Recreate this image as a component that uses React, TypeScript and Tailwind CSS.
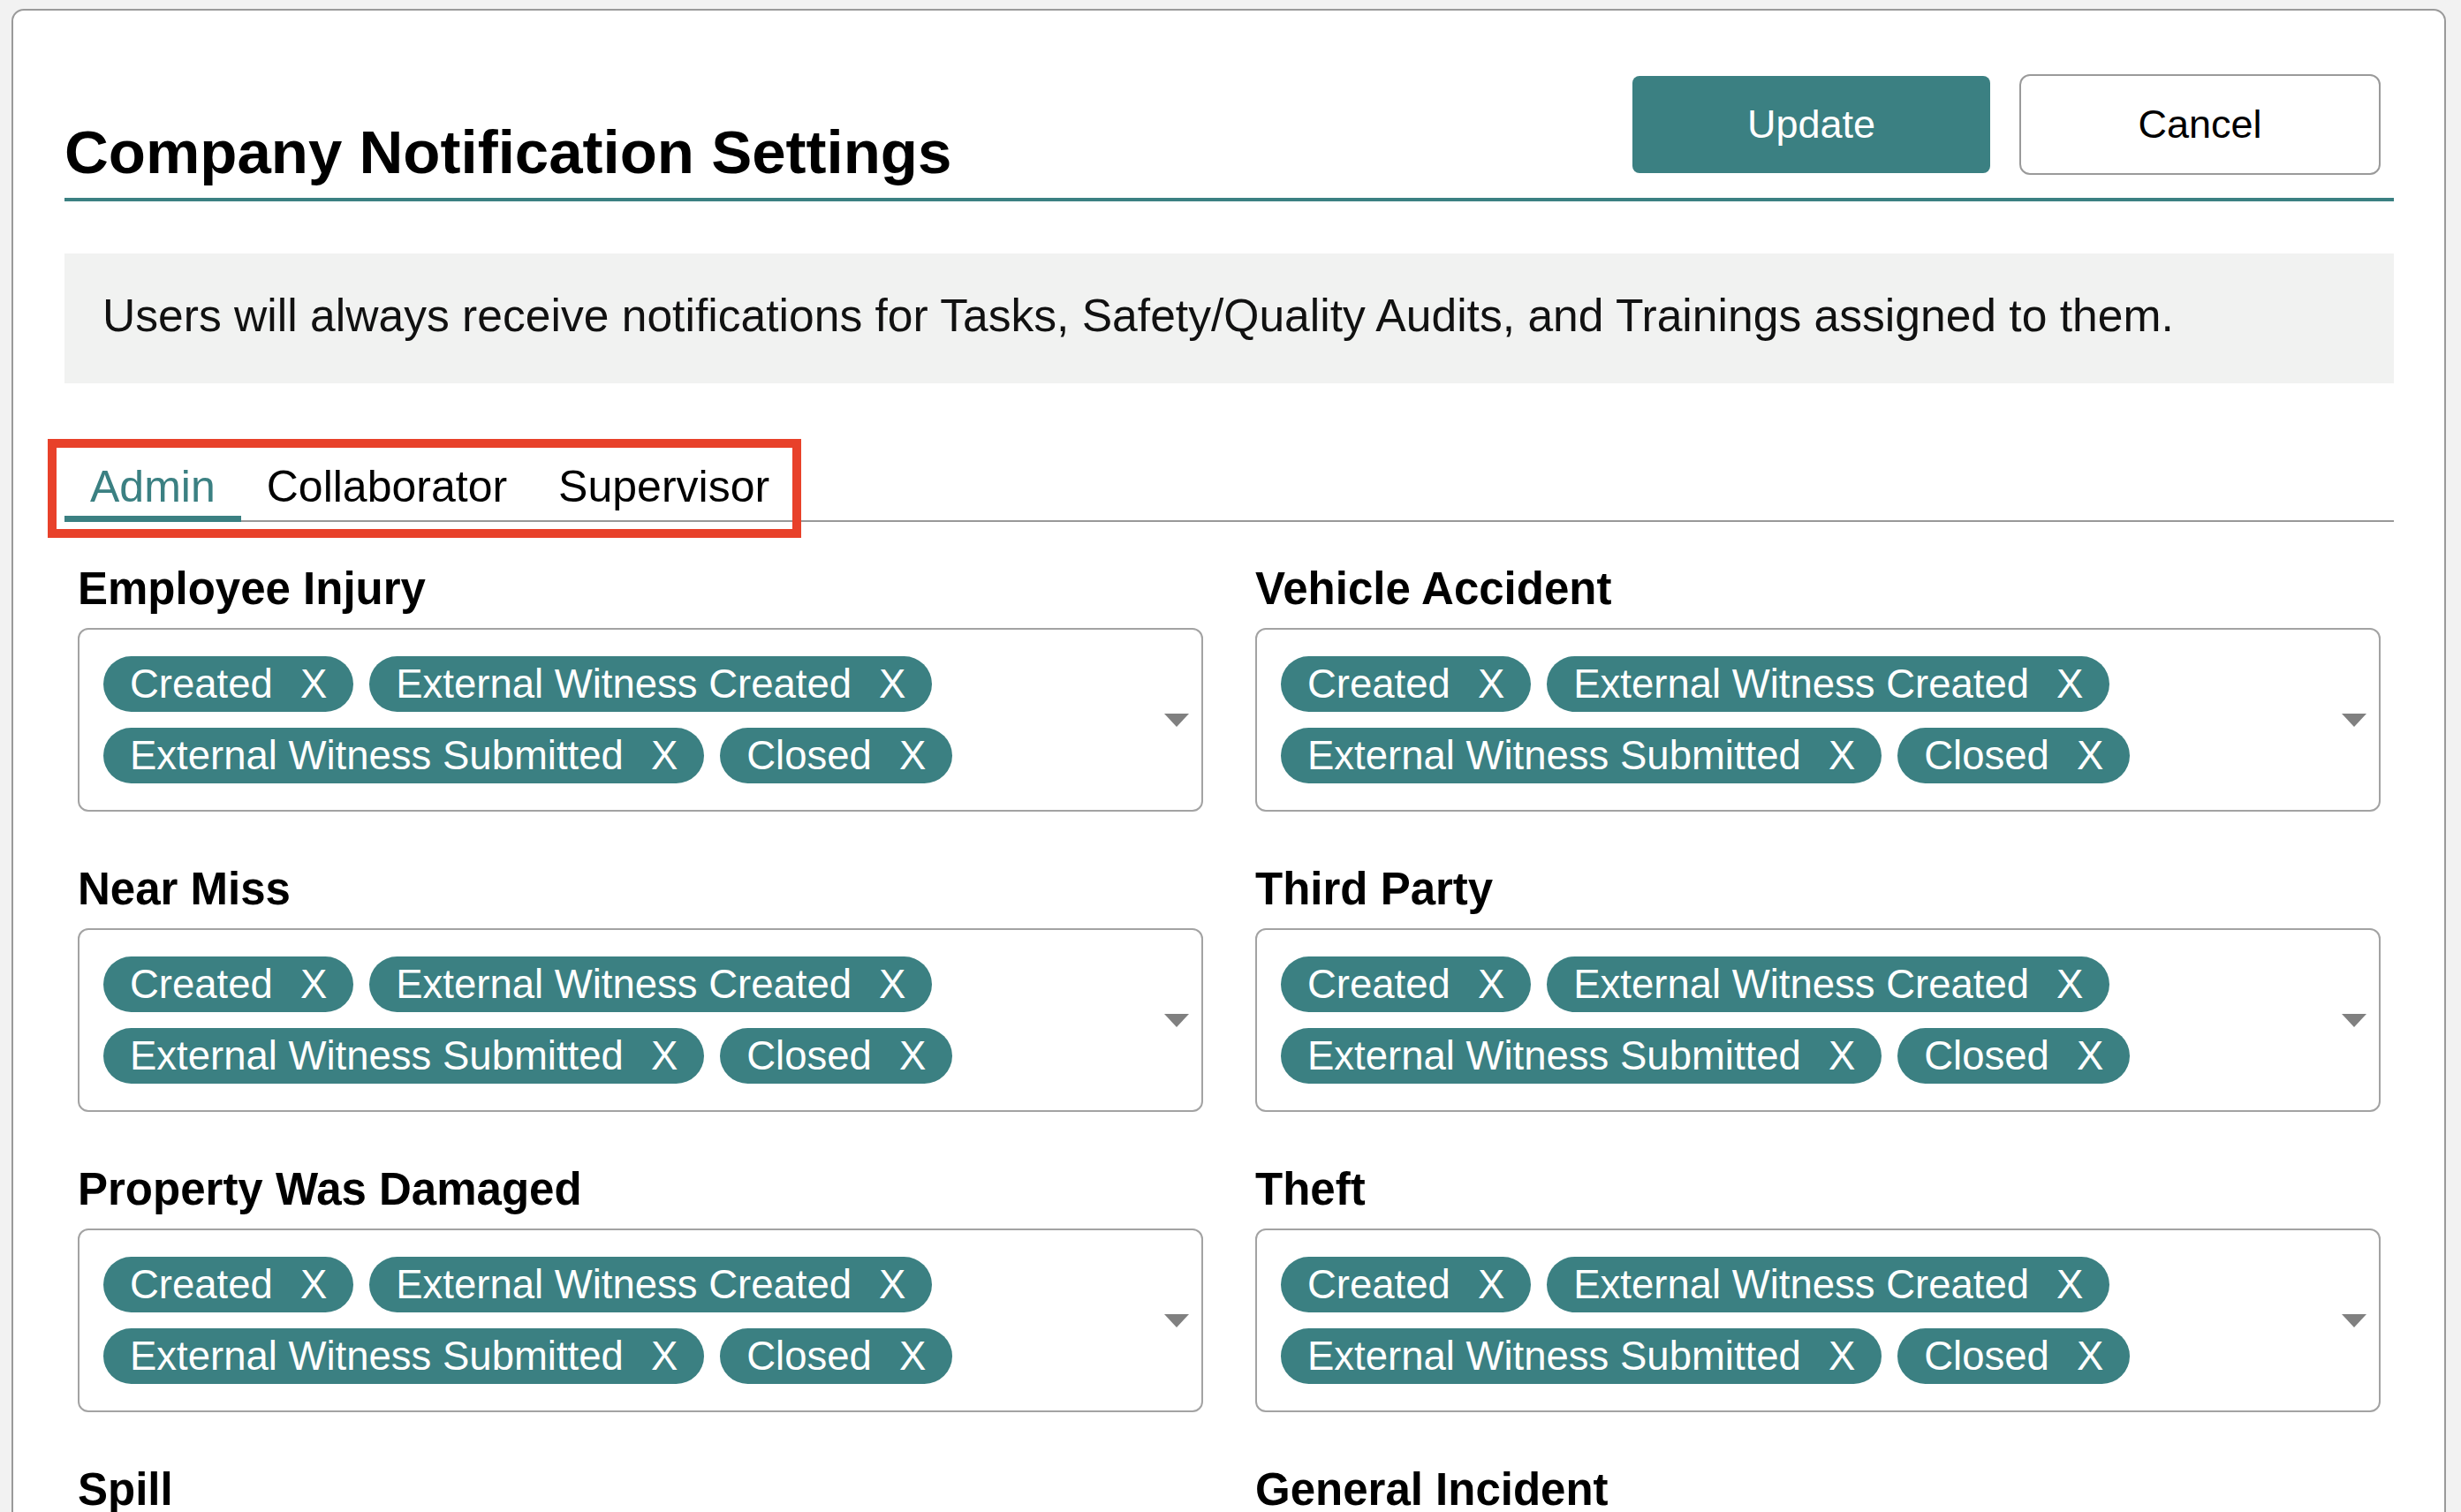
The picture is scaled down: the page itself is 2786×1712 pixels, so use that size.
import { useState } from 'react';

const SECTIONS = [
  'Employee Injury',
  'Vehicle Accident',
  'Near Miss',
  'Third Party',
  'Property Was Damaged',
  'Theft',
  'Spill',
  'General Incident',
];

const EVENTS = ['Created', 'External Witness Created', 'External Witness Submitted', 'Closed'];

const TABS = ['Admin', 'Collaborator', 'Supervisor'];

function Chip({ label }: { label: string }) {
  return (
    <span className="inline-flex items-center h-[63px] px-[30px] rounded-full bg-[#3b8082] text-white text-[45.5px] leading-none whitespace-nowrap">
      <span>{label}</span>
      <span className="ml-[31px]">X</span>
    </span>
  );
}

function EventSelect({ title }: { title: string }) {
  return (
    <div className="flex flex-col">
      <h3 className="text-[51px] font-bold leading-none text-black mb-[19px]">{title}</h3>
      <div className="h-[208px] border-2 border-[#a3a3a3] rounded-[12px] flex items-center pl-[27px] pr-[14px]">
        <div className="flex-1 flex flex-wrap gap-[18px] pr-[20px]">
          {EVENTS.map(e => (
            <Chip key={e} label={e} />
          ))}
        </div>
        <svg width="28" height="15" viewBox="0 0 28 15" className="shrink-0">
          <polygon points="0,0 28,0 14,15" fill="#808080" />
        </svg>
      </div>
    </div>
  );
}

export default function App() {
  const [tab, setTab] = useState('Admin');

  return (
    <div className="h-screen bg-[#f2f2f2] overflow-hidden font-['Liberation_Sans',Arial,sans-serif]">
      <div className="ml-[13px] mt-[10px] w-[2756px] bg-white border-2 border-[#9a9a9a] rounded-t-[14px] pl-[58px] pr-[57px] pb-[80px]">
        {/* Header */}
        <div className="flex items-end justify-between pt-[72px] border-b-[4px] border-[#3b8082]">
          <h1 className="text-[69px] font-bold leading-none text-black pb-[17px]">
            Company Notification Settings
          </h1>
          <div className="flex items-center gap-[33px] mb-[26px] mr-[15px]">
            <button className="w-[405px] h-[110px] rounded-[8px] bg-[#3b8082] text-white text-[45px]">
              Update
            </button>
            <button className="w-[409px] h-[114px] rounded-[12px] border-2 border-[#9a9a9a] bg-white text-black text-[45px]">
              Cancel
            </button>
          </div>
        </div>

        {/* Info */}
        <div className="mt-[59px] h-[147px] bg-[#f1f2f1] flex items-center pl-[43px] pb-[6px]">
          <p className="text-[51.6px] leading-none text-[#111]">
            Users will always receive notifications for Tasks, Safety/Quality Audits, and Trainings assigned to them.
          </p>
        </div>

        {/* Tabs */}
        <div className="relative mt-[92px] flex border-b-2 border-[#999]">
          {TABS.map(t => (
            <button
              key={t}
              onClick={() => setTab(t)}
              className={
                t === tab
                  ? 'px-[29px] pb-[8px] -mb-[2px] border-b-[7px] border-[#3b8082] text-[#3b8082] text-[50px] leading-none'
                  : 'px-[29px] pb-[8px] -mb-[2px] border-b-[7px] border-transparent text-black text-[50px] leading-none'
              }
            >
              {t}
            </button>
          ))}
          <div className="pointer-events-none absolute left-[-19px] top-[-29px] w-[853px] h-[112px] border-[10px] border-[#e8412a]" />
        </div>

        {/* Sections */}
        <div className="grid grid-cols-2 gap-x-[59px] gap-y-[62px] px-[15px] mt-[50px]">
          {SECTIONS.map(s => (
            <EventSelect key={s} title={s} />
          ))}
        </div>
      </div>
    </div>
  );
}
